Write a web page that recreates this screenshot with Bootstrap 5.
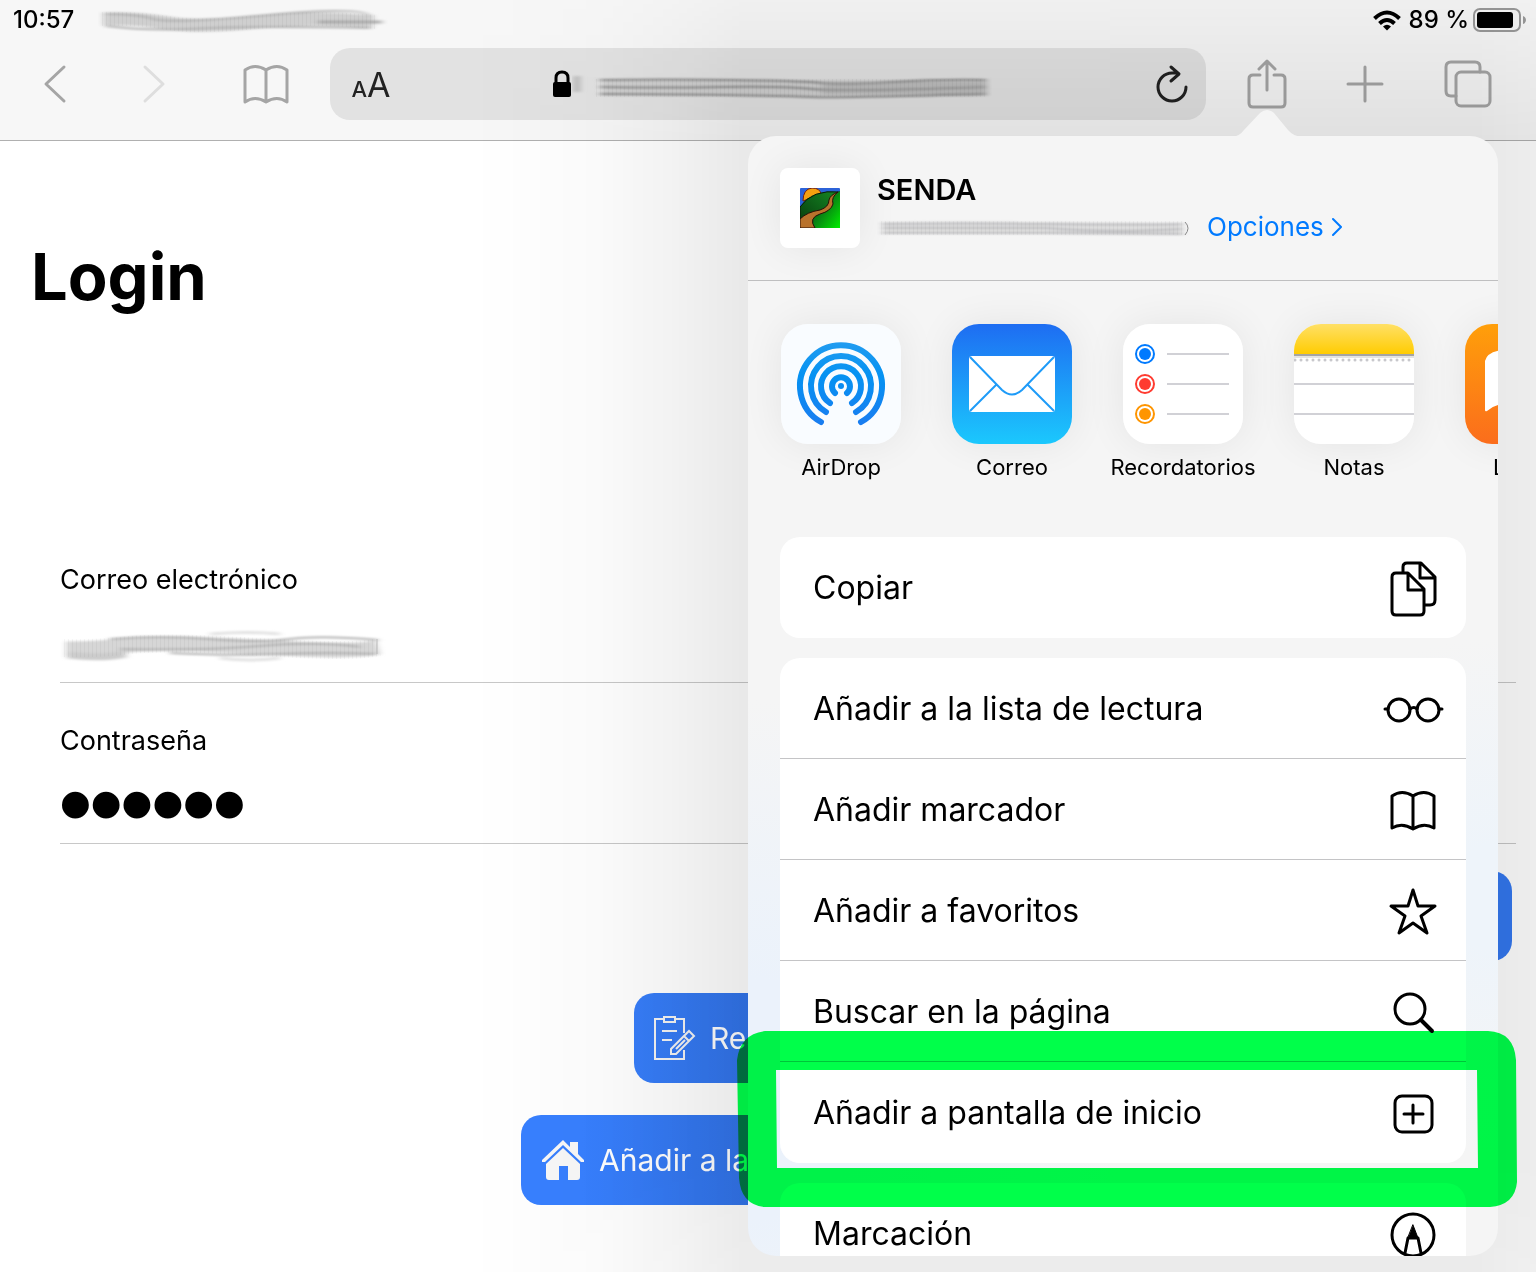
<!DOCTYPE html>
<html lang="es">
<head>
<meta charset="utf-8">
<meta name="viewport" content="width=device-width, initial-scale=1">
<title>SENDA - Login</title>
<link rel="stylesheet" href="https://cdn.jsdelivr.net/npm/bootstrap@5.3.0/dist/css/bootstrap.min.css">
<style>
  body { font-family: Inter, "Liberation Sans", sans-serif; color: #000; min-height: 100vh; }
  svg { display: block; flex: none; }
  .line-icon { fill: none; stroke: currentColor; stroke-width: 3; stroke-linecap: round; stroke-linejoin: round; }
  .line-thin { stroke-width: 2; }

  /* Browser chrome */
  .chrome { background: #f7f7f7; border-bottom: 1px solid #b0b0b0; height: 141px; }
  .status { height: 40px; padding: 0 10px 0 13px; font-size: 24px; line-height: 40px; font-weight: 500; }
  .toolbar { height: 88px; }
  .tool { width: 48px; height: 56px; padding: 0; border: 0; background: none; color: #a5a5a5; display: flex; align-items: center; justify-content: center; }
  .tool:disabled { color: #dedede; }
  .nav-tools { padding: 0 40px 0 31px; }
  .nav-tools .forward { margin: 0 64px 0 51px; }
  .page-tools { padding: 0 44px 0 37px; }
  .page-tools .new-tab { margin: 0 55px 0 50px; }
  .address { height: 72px; background: #e2e2e2; border-radius: 20px; padding: 0 10px 0 17px; }
  .tool.dark { color: #222; }
  .reader { color: #333; line-height: 40px; font-weight: 500; white-space: nowrap; padding-top: 8px; }
  .reader-s { font-size: 22px; }
  .reader-l { font-size: 34px; font-weight: 400; }

  /* Login page */
  .login { padding: 96px 20px 0 60px; }
  .login h1 { font-size: 65px; line-height: 80px; font-weight: 700; margin: 0 0 245px -29px; }
  .field { margin-bottom: 40px; }
  .field label { display: block; font-size: 27px; line-height: 36px; }
  .field input { height: 85px; border: 0; border-bottom: 1px solid #c8c8c8; border-radius: 0; padding: 0; background: none; color: #000; }
  .field input[type=password] { font: 88px/78px "Liberation Sans", sans-serif; padding-top: 6px; -webkit-text-stroke: 3px #000; }
  .field .smear { position: absolute; left: 0; top: 29px; }
  .actions { gap: 32px; margin-top: -13px; }
  .btn-senda { background: #3478f0; color: #fff; border: 0; border-radius: 20px; height: 90px; font-size: 30px; line-height: 40px; padding: 0 20px; display: flex; align-items: center; gap: 14px; white-space: nowrap; }
  .btn-senda:hover { background: #3171e0; color: #fff; }
  .btn-mid { width: 308px; background: linear-gradient(to right, #377efa, #3274ea 120px); }
  .btn-wide { width: 534px; background: linear-gradient(to right, #3880ff 60px, #3274ea 230px); }

  /* Share sheet */
  .share { position: absolute; top: 136px; right: 38px; bottom: 16px; width: 750px; max-width: 96vw; }
  .share::before { content: ""; position: absolute; inset: -136px -38px -16px -280px; pointer-events: none;
    background: linear-gradient(to right, rgba(0,0,0,0), rgba(0,0,0,.006) 60px, rgba(0,0,0,.02) 130px, rgba(0,0,0,.046) 200px, rgba(0,0,0,.088) 275px, rgba(0,0,0,.09) calc(100% - 60px), rgba(0,0,0,.07));
    -webkit-mask-image: linear-gradient(rgba(0,0,0,.33), rgba(0,0,0,.62) 60px, #000 140px, #000 calc(100% - 120px), rgba(0,0,0,.85));
    mask-image: linear-gradient(rgba(0,0,0,.33), rgba(0,0,0,.62) 60px, #000 140px, #000 calc(100% - 120px), rgba(0,0,0,.85)); }
  .share-tip { position: absolute; top: -26px; right: 195px; }
  .share-body { position: relative; height: 100%; overflow: hidden; border-radius: 28px;
    background: radial-gradient(380px 400px at 0 86%, #ebf2fb 30%, rgba(235,242,251,0)), radial-gradient(260px 260px at 100% 68%, #eef4fa 20%, rgba(238,244,250,0)), #f5f5f5; }
  .share-head { height: 145px; padding: 0 32px; gap: 17px; border-bottom: 1px solid #bfbfc0; }
  .site-icon { width: 80px; height: 80px; border-radius: 8px; background: #fff; box-shadow: 0 0 40px rgba(0,0,0,.07); }
  .site-name { font-size: 29px; line-height: 38px; font-weight: 600; }
  .options { font-size: 26px; line-height: 36px; color: #007aff; text-decoration: none; }
  .apps { padding: 43px 0 0 19px; gap: 23px; height: 256px; overflow: hidden; }
  .app { width: 148px; flex: none; color: #000; text-decoration: none; font-size: 22px; line-height: 28px; }
  .app svg { margin: 0 auto 9px; border-radius: 27px; box-shadow: 0 0 40px rgba(0,0,0,.07); }
  .acts { margin: 0 32px 20px; border-radius: 20px; }
  .act { height: 101px; border: 0; border-bottom: 1px solid #c4c4c6; padding: 1px 20px 0 33px; font-size: 32px; line-height: 44px; color: #000; background: #fff; }
  .act:last-child { border-bottom-color: #fff; }
  .marker { position: absolute; left: -12px; top: 892px; mix-blend-mode: multiply; pointer-events: none; }
</style>
<script src="https://cdn.jsdelivr.net/npm/bootstrap@5.3.0/dist/js/bootstrap.bundle.min.js"></script>
</head>
<body class="position-relative overflow-hidden bg-white">

<svg width="0" height="0" class="position-absolute" aria-hidden="true">
  <defs>
    <filter id="soft" x="-5%" y="-50%" width="110%" height="200%"><feGaussianBlur stdDeviation="3 1"/></filter>
    <pattern id="comb" width="4" height="8" patternUnits="userSpaceOnUse"><rect width="1" height="8" fill="#000" fill-opacity=".04"/></pattern>
  </defs>
</svg>

<header class="chrome">
  <div class="status d-flex align-items-center">
    <span>10:57</span>
    <svg class="ms-4" width="290" height="28" viewBox="0 0 290 28" fill="none" aria-hidden="true">
      <g filter="url(#soft)">
        <path d="M5 13Q40 12 70 17T160 16T275 16" stroke="#cfcfcf" stroke-width="13"/>
        <path d="M8 8Q40 8 55 13T170 9T272 11M8 20Q50 25 90 23T180 21T272 22" stroke="#b4b4b4" stroke-width="2"/>
        <path d="M220 16L284 16" stroke="#aaa" stroke-width="3"/>
      </g>
      <path d="M2 13Q40 12 70 17T160 16T278 16" stroke="url(#comb)" stroke-width="14"/>
    </svg>
    <svg class="ms-auto" width="28" height="21" viewBox="0 0 28 21" fill="none" stroke="#000" stroke-width="4" aria-label="Wi-Fi">
      <path d="M1.500 8.500Q14-3.500 26.500 8.500M6.500 13.500Q14 6.500 21.500 13.500"/>
      <path d="M10 16.500Q14 13 18 16.500L14 20.500Z" fill="#000" stroke="none"/>
    </svg>
    <span class="ms-2">89 %</span>
    <svg class="ms-1" width="53" height="24" viewBox="0 0 53 24" aria-label="Batería">
      <rect x="1" y="1" width="46" height="22" rx="6" fill="none" stroke="#999" stroke-width="2"/>
      <rect x="4" y="4" width="36" height="16" rx="3"/>
      <path d="M50 8Q53 9 53 12T50 16Z" fill="#999"/>
    </svg>
  </div>

  <nav class="toolbar d-flex align-items-center">
    <div class="nav-tools d-flex align-items-center">
      <button class="tool" aria-label="Atrás"><svg class="line-icon" width="24" height="40" viewBox="0 0 24 40"><path d="M21 3L3 20L21 37"/></svg></button>
      <button class="tool forward" disabled aria-label="Adelante"><svg class="line-icon" width="24" height="40" viewBox="0 0 24 40"><path d="M3 3L21 20L3 37"/></svg></button>
      <button class="tool" aria-label="Marcadores"><svg class="line-icon" width="46" height="40" viewBox="0 0 46 40"><path d="M23 6V38M23 6Q12-1 2 6V38Q12 31 23 38Q34 31 44 38V6Q34-1 23 6"/></svg></button>
    </div>
    <div class="address d-flex align-items-center flex-grow-1">
      <button class="tool dark reader" aria-label="Tamaño del texto"><span><span class="reader-s">A</span><span class="reader-l">A</span></span></button>
      <div class="flex-grow-1 d-flex justify-content-center align-items-center">
        <svg width="20" height="28" viewBox="0 0 20 28" aria-label="Sitio seguro"><path d="M4 13V8Q4 2 10 2T16 8V13" fill="none" stroke="#000" stroke-width="3"/><rect x="1" y="12" width="18" height="15" rx="2"/></svg>
        <svg class="mt-2" width="420" height="32" viewBox="0 0 420 32" fill="none" aria-hidden="true">
          <g filter="url(#soft)">
            <path d="M2 12H8" stroke="#999" stroke-width="16" opacity=".6"/>
            <path d="M30 16H416" stroke="#bbb" stroke-width="16" opacity=".5"/>
            <path d="M28 8Q90 7 160 8T250 11T320 10T414 8M28 15Q90 16 150 15T240 17T414 15M28 22Q80 22 150 23T240 25T414 22" stroke="#8c8c8c" stroke-width="2"/>
            <path d="M250 16H414" stroke="#aaa" stroke-width="12" opacity=".5"/>
          </g>
          <path d="M24 16H416" stroke="url(#comb)" stroke-width="18"/>
        </svg>
      </div>
      <button class="tool dark" aria-label="Recargar"><svg class="line-icon" width="34" height="40" viewBox="0 0 34 40"><path d="M31 23A14 14 0 1 1 17 9H23M16 3L24 10L16 17"/></svg></button>
    </div>
    <div class="page-tools d-flex align-items-center">
      <button class="tool" aria-label="Compartir"><svg class="line-icon" width="40" height="50" viewBox="0 0 40 50"><path d="M13 16H6Q2 16 2 20V44Q2 48 6 48H34Q38 48 38 44V20Q38 16 34 16H27M20 31V3M12 10L20 2L28 10"/></svg></button>
      <button class="tool new-tab" aria-label="Nueva pestaña"><svg class="line-icon" width="38" height="38" viewBox="0 0 38 38"><path d="M19 2V36M2 19H36"/></svg></button>
      <button class="tool" aria-label="Pestañas"><svg class="line-icon" width="48" height="48" viewBox="0 0 48 48"><path d="M12 36H7Q2 36 2 31V7Q2 2 7 2H31Q36 2 36 7V12"/><rect x="12" y="12" width="34" height="34" rx="5"/></svg></button>
    </div>
  </nav>
</header>

<main class="login">
  <h1>Login</h1>
  <form>
    <div class="field">
      <label for="email">Correo electrónico</label>
      <div class="position-relative">
        <input id="email" type="email" class="w-100 d-block">
        <svg class="smear" width="326" height="40" viewBox="0 0 326 40" fill="none" aria-hidden="true">
          <g filter="url(#soft)">
            <path d="M6 22Q40 22 70 18T200 20T318 20" stroke="#d6d6d6" stroke-width="15"/>
            <path d="M8 28Q40 32 66 27" stroke="#ccc" stroke-width="7"/>
            <path d="M50 12Q100 8 150 12T230 12T318 13M60 22Q140 24 200 19T300 20M110 26Q170 29 220 27T316 27" stroke="#b4b4b4" stroke-width="2"/>
            <path d="M150 7Q190 4 220 7M160 31Q190 35 220 31" stroke="#e2e2e2" stroke-width="3"/>
          </g>
          <path d="M4 21Q40 22 70 18T200 20T318 20" stroke="url(#comb)" stroke-width="18"/>
          <path d="M317 12V27" stroke="#bbb"/>
        </svg>
      </div>
    </div>
    <div class="field">
      <label for="pass">Contraseña</label>
      <input id="pass" type="password" value="sendas" class="w-100 d-block">
    </div>
    <div class="actions d-flex flex-column align-items-center">
      <button type="submit" class="btn btn-senda align-self-end me-1">Entrar</button>
      <button type="button" class="btn btn-senda btn-mid">
        <svg width="42" height="48" viewBox="0 0 42 48" fill="none" stroke="#f4f4f4" stroke-width="2"><path d="M11 5H1V45H30V36M30 19V5H21M10 3H21V8H10ZM8 17H23M8 26H18"/><path d="M17 40V35L35 17L40 22L22 40ZM30 22L35 27M22 35L31 26"/></svg>
        <span>Reset</span>
      </button>
      <button type="button" class="btn btn-senda btn-wide">
        <svg width="44" height="42" viewBox="0 0 44 42" fill="#f8f8f8"><path d="M22 1L29 8V3H37V15L43 21V23H40L22 6L4 23H1V21Z"/><path d="M22 9L39 25V38Q39 41 36 41H27V27H18V41H8Q5 41 5 38V25Z"/></svg>
        <span>Añadir a la pantalla de inicio</span>
      </button>
    </div>
  </form>
</main>

<aside class="share">
  <svg class="share-tip" width="72" height="27" viewBox="0 0 72 27"><path d="M0 27Q8 27 13 20L29 3Q36-3 43 3L57 20Q63 27 72 27Z" fill="#f5f5f5"/></svg>
  <div class="share-body">
    <div class="share-head d-flex align-items-center">
      <div class="site-icon d-flex align-items-center justify-content-center">
        <svg width="40" height="40" viewBox="0 0 40 40">
          <defs><linearGradient id="hill" x1="0" y1="0" x2="1" y2="1"><stop offset=".35" stop-color="#0a6a18"/><stop offset="1" stop-color="#00ee00"/></linearGradient>
          <linearGradient id="far" x1="1" y1="0" x2="0" y2="1"><stop offset="0" stop-color="#168a24"/><stop offset="1" stop-color="#06380c"/></linearGradient></defs>
          <rect width="40" height="40" rx="1" fill="#2c62d8"/>
          <path d="M3 13Q3 1 12 0Q20 0 21 6Z" fill="#f5a010" stroke="#7a2008"/>
          <path d="M0 19Q12 1 40 4V40H0Z" fill="url(#far)" stroke="#081808"/>
          <path d="M15 40Q8 29 22 24Q33 19 31 11L40 3V40Z" fill="url(#hill)"/>
          <path d="M0 40V31Q7 24 20 22Q29 19 29 12Q30 7 38 4Q31 9 33 16Q31 23 20 26Q8 30 15 40Z" fill="#b8722c" stroke="#281008"/>
        </svg>
      </div>
      <div>
        <div class="site-name">SENDA</div>
        <div class="d-flex align-items-center">
          <svg width="314" height="24" viewBox="0 0 314 24" fill="none" class="me-3" aria-hidden="true">
            <g filter="url(#soft)">
              <path d="M5 13Q80 12 170 13T306 14" stroke="#dfdfdf" stroke-width="12"/>
              <path d="M5 9Q80 8 170 9T306 9M5 13H170Q230 18 306 14M5 18Q80 18 170 18T306 19" stroke="#bdbdc0" stroke-width="2"/>
            </g>
            <path d="M4 13H308" stroke="url(#comb)" stroke-width="14"/>
            <path d="M308 7Q314 13 308 20" stroke="#888"/>
          </svg>
          <a href="#" class="options d-flex align-items-center">Opciones
            <svg class="line-icon line-thin ms-2" width="14" height="22" viewBox="2 0 14 22"><path d="M3 3L11 11L3 19"/></svg></a>
        </div>
      </div>
    </div>

    <div class="apps d-flex">
      <a href="#" class="app text-center">
        <svg width="120" height="120" viewBox="0 0 120 120">
          <defs><linearGradient id="air" gradientUnits="userSpaceOnUse" x1="0" y1="18" x2="0" y2="102"><stop offset="0" stop-color="#229cf0"/><stop offset=".4" stop-color="#0592f2"/><stop offset="1" stop-color="#1b7cf0"/></linearGradient></defs>
          <rect width="120" height="120" fill="#f9fcff"/>
          <circle cx="60" cy="62" r="3" fill="#0a8cf2"/>
          <g fill="none" stroke="url(#air)" stroke-width="6" stroke-linecap="round"><path d="M54 69A9 9 0 1 1 66 69" /><path d="M49 79A20 20 0 1 1 71 79"/><path d="M45 88A30 30 0 1 1 75 88"/><path d="M40 98A41 41 0 1 1 80 98"/></g>
        </svg>AirDrop</a>
      <a href="#" class="app text-center">
        <svg width="120" height="120" viewBox="0 0 120 120">
          <defs><linearGradient id="mail" x1="0" y1="0" x2="0" y2="1"><stop offset="0" stop-color="#1e6df2"/><stop offset="1" stop-color="#1bc8fd"/></linearGradient></defs>
          <rect width="120" height="120" fill="url(#mail)"/>
          <rect x="17" y="32" width="86" height="56" rx="3" fill="#fff"/>
          <path d="M18 33L50 66Q60 75 70 66L102 33M18 87L44 61M102 87L76 61" fill="none" stroke="#1e9bf8" stroke-width="2"/>
        </svg>Correo</a>
      <a href="#" class="app text-center">
        <svg width="120" height="120" viewBox="0 0 120 120" fill="none" stroke-width="2">
          <rect width="120" height="120" fill="#fff"/>
          <g stroke="#d1d1d6"><path d="M44 30H106M44 60H106M44 90H106"/></g>
          <circle cx="22" cy="30" r="9" stroke="#007aff"/><circle cx="22" cy="30" r="6" fill="#007aff"/>
          <circle cx="22" cy="60" r="9" stroke="#ff3b30"/><circle cx="22" cy="60" r="6" fill="#ff3b30"/>
          <circle cx="22" cy="90" r="9" stroke="#ff9500"/><circle cx="22" cy="90" r="6" fill="#ff9500"/>
        </svg>Recordatorios</a>
      <a href="#" class="app text-center">
        <svg width="120" height="120" viewBox="0 0 120 120">
          <defs><linearGradient id="note" x1="0" y1="0" x2="0" y2="1"><stop offset="0" stop-color="#ffe066"/><stop offset="1" stop-color="#ffcc02"/></linearGradient></defs>
          <rect width="120" height="120" fill="#fff"/><rect width="120" height="30" fill="url(#note)"/>
          <rect y="30" width="120" height="2" fill="#a5a5a5"/><rect y="32" width="120" height="2" fill="#e4e4e4"/>
          <path d="M1 36H120" stroke="#c8c8cc" stroke-width="3" stroke-linecap="round" stroke-dasharray="0 6"/>
          <path d="M0 60H120M0 90H120" stroke="#d1d1d6" stroke-width="2"/>
        </svg>Notas</a>
      <a href="#" class="app text-center">
        <svg width="120" height="120" viewBox="0 0 120 120">
          <defs><linearGradient id="libro" x1="0" y1="0" x2="0" y2="1"><stop offset="0" stop-color="#ff9f0a"/><stop offset="1" stop-color="#fb6d1c"/></linearGradient></defs>
          <rect width="120" height="120" fill="url(#libro)"/>
          <path d="M20 37Q22 28 38 26Q52 26 58 34V92Q40 72 22 87Q20 88 20 86ZM62 34Q80 18 100 37V88Q80 72 62 92Z" fill="#fff"/>
        </svg>Libros</a>
    </div>

    <div class="list-group acts">
      <button class="list-group-item act d-flex align-items-center justify-content-between">Copiar
        <svg class="line-icon" width="64" height="64" viewBox="0 3 64 64"><path d="M21 19V14Q21 10 25 10H39L53 24V47Q53 52 48 52H43M38 10V25H53"/><path d="M14 20H26L42 36V58Q42 62 38 62H14Q10 62 10 58V24Q10 20 14 20ZM26 21V37H42" fill="#fff"/></svg></button>
    </div>
    <div class="list-group acts">
      <button class="list-group-item act d-flex align-items-center justify-content-between">Añadir a la lista de lectura
        <svg class="line-icon" width="64" height="64" viewBox="0 0 64 64"><circle cx="17" cy="33" r="11"/><circle cx="46" cy="33" r="11"/><path d="M28 32Q32 29 35 32M3 32H6M57 32H60"/></svg></button>
      <button class="list-group-item act d-flex align-items-center justify-content-between">Añadir marcador
        <svg class="line-icon" width="64" height="64" viewBox="0 0 64 64"><path d="M31 18V51M31 18Q20 11 10 18V50Q20 44 31 51Q42 44 52 50V18Q42 11 31 18"/></svg></button>
      <button class="list-group-item act d-flex align-items-center justify-content-between">Añadir a favoritos
        <svg class="line-icon" width="64" height="64" viewBox="0 0 64 64"><path d="M31 11L36 27H53L39 37L45 54L31 44L17 54L23 37L9 27H26Z"/></svg></button>
      <button class="list-group-item act d-flex align-items-center justify-content-between">Buscar en la página
        <svg class="line-icon" width="64" height="64" viewBox="0 0 64 64"><circle cx="28" cy="29" r="15"/><path d="M39 40L50 51" stroke-width="4"/></svg></button>
      <button class="list-group-item act d-flex align-items-center justify-content-between">Añadir a pantalla de inicio
        <svg class="line-icon" width="64" height="64" viewBox="0 0 64 64"><rect x="13" y="15" width="37" height="36" rx="7"/><path d="M31 24V42M22 33H41"/></svg></button>
    </div>
    <div class="list-group acts">
      <button class="list-group-item act d-flex align-items-center justify-content-between">Marcación
        <svg class="line-icon" width="64" height="64" viewBox="0 0 64 64"><circle cx="31" cy="33" r="21"/><path d="M23 51L26 36H36L39 51"/><path d="M31 23L36 36H26Z" fill="#000" stroke-width="1"/></svg></button>
    </div>
  </div>
  <svg class="marker" width="784" height="184" viewBox="0 0 784 184" aria-hidden="true">
    <path fill="#00ff4a" fill-rule="evenodd" d="M29 3H752Q778 4 780 32L781 154Q779 177 754 179H29Q5 177 3 150L1 32Q4 6 29 3ZM40 42L41 140H742L741 42Z"/>
  </svg>
</aside>
</body>
</html>
